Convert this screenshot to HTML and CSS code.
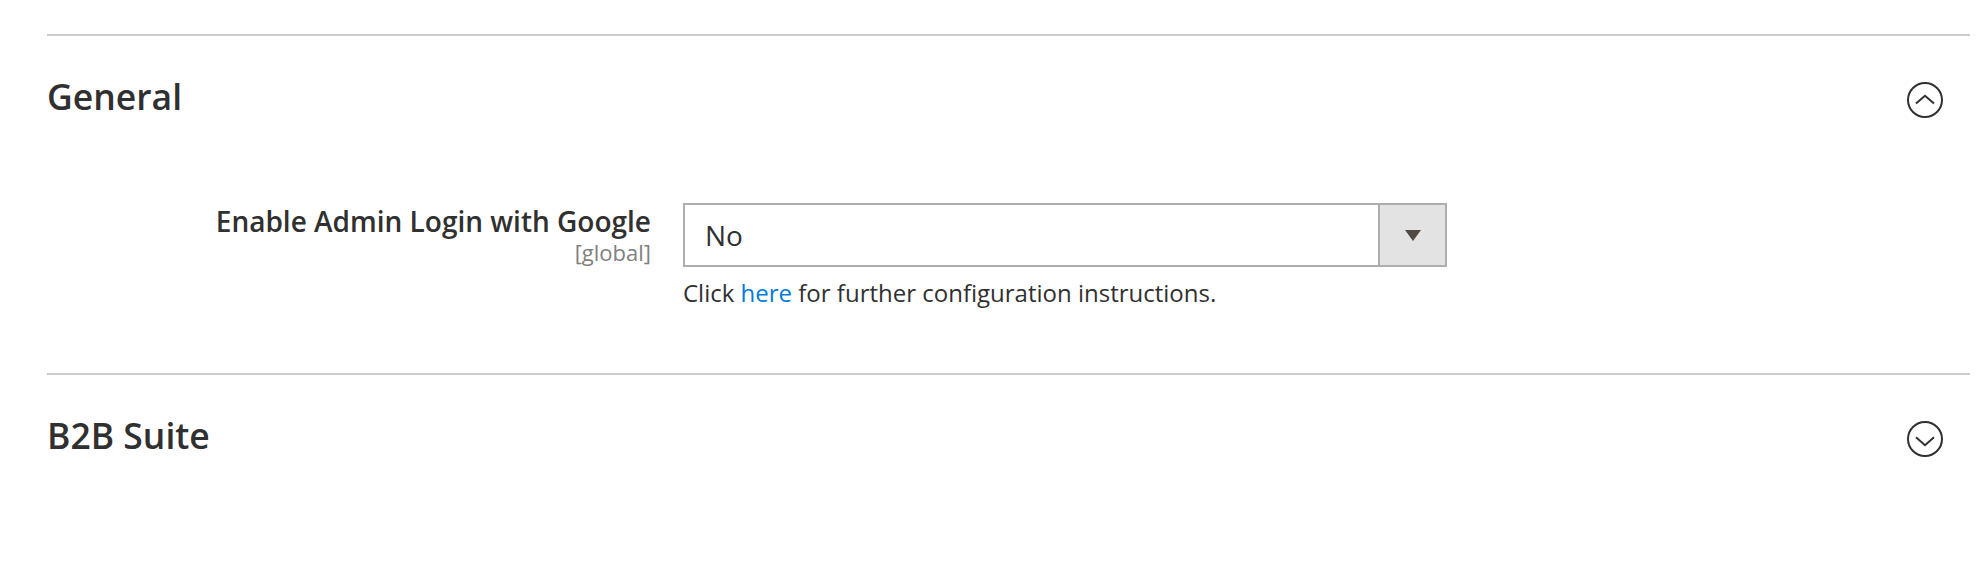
FILE: index.html
```html
<!DOCTYPE html>
<html lang="en">
<head>
<meta charset="utf-8">
<title>Configuration</title>
<link rel="stylesheet" href="styles.css">
</head>
<body>
<div class="page">
  <section class="block">
    <div class="block-head">
      <h2 class="block-title">General</h2>
      <svg class="toggle" width="36" height="36" viewBox="0 0 36 36" aria-hidden="true">
        <circle cx="18" cy="18" r="17" fill="none" stroke="#303030" stroke-width="2"/>
        <polyline points="9,21.5 18,13.8 27,21.5" fill="none" stroke="#303030" stroke-width="2"/>
      </svg>
    </div>
    <div class="fields">
      <div class="field-row">
        <div class="label">
          <div class="label-text">Enable Admin Login with Google</div>
          <div class="scope">[global]</div>
        </div>
        <div class="control">
          <div class="select">
            <span class="select-value">No</span>
            <span class="select-btn">
              <svg width="16" height="11" viewBox="0 0 16 11" aria-hidden="true"><polygon points="0,0 16,0 8,11" fill="#514943"/></svg>
            </span>
          </div>
          <div class="note">Click <a class="link" href="#">here</a> for further configuration instructions.</div>
        </div>
      </div>
    </div>
  </section>
  <section class="block">
    <div class="block-head">
      <h2 class="block-title">B2B Suite</h2>
      <svg class="toggle" width="36" height="36" viewBox="0 0 36 36" aria-hidden="true">
        <circle cx="18" cy="18" r="17" fill="none" stroke="#303030" stroke-width="2"/>
        <polyline points="9,16.3 18,24.2 27,16.3" fill="none" stroke="#303030" stroke-width="2"/>
      </svg>
    </div>
  </section>
</div>
</body>
</html>
```
FILE: styles.css
```css
html, body {
  margin: 0;
  padding: 0;
  background: #ffffff;
}
body {
  font-family: "Open Sans", "Liberation Sans", sans-serif;
  color: #303030;
}
.page {
  padding: 34px 16px 0 47px;
}
.block {
  border-top: 2px solid #cccccc;
}
.block-head {
  display: flex;
  align-items: center;
  justify-content: space-between;
  padding: 37px 27px 38px 0;
}
.block-title {
  margin: 0;
  font-size: 35.5px;
  font-weight: 600;
  line-height: 47px;
  color: #303030;
}
.toggle {
  display: block;
  margin-top: 6px;
}
.fields {
  padding: 45px 0 64px 0;
}
.field-row {
  display: grid;
  grid-template-columns: 604px 764px;
  column-gap: 32px;
}
.label {
  text-align: right;
}
.label-text {
  font-size: 28px;
  font-weight: 600;
  line-height: 36px;
  color: #303030;
}
.scope {
  margin-top: 2px;
  font-size: 22px;
  line-height: 22px;
  color: #808080;
}
.select {
  display: flex;
  height: 64px;
  box-sizing: border-box;
  border: 2px solid #adadad;
  background: #ffffff;
}
.select-value {
  flex: 1;
  display: flex;
  align-items: center;
  padding-left: 20px;
  font-size: 28px;
  color: #303030;
}
.select-btn {
  width: 65px;
  border-left: 2px solid #adadad;
  background: #e3e3e3;
  display: flex;
  align-items: center;
  justify-content: center;
}
.select-btn svg {
  display: block;
}
.note {
  margin-top: 9px;
  font-size: 24px;
  line-height: 33px;
  color: #303030;
}
.link {
  color: #007bdb;
  text-decoration: none;
}
```
